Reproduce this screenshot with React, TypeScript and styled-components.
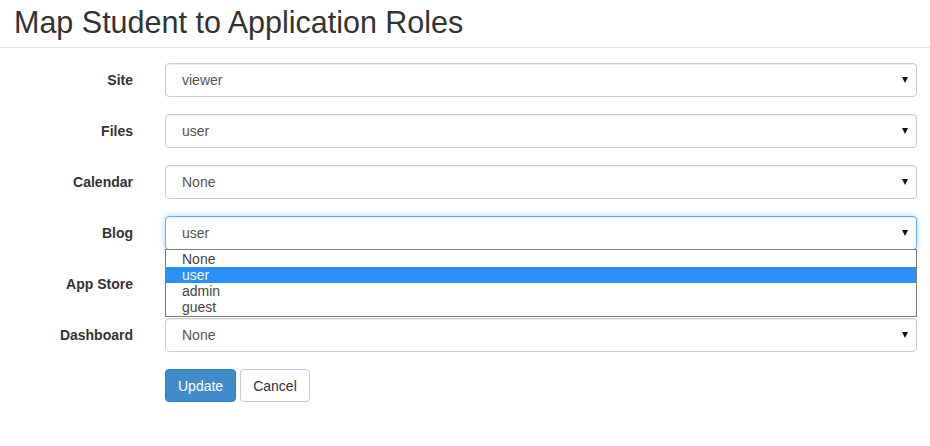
import React from "react";
import styled, { createGlobalStyle, css } from "styled-components";

const GlobalStyle = createGlobalStyle`
  body {
    margin: 0;
    background: #fff;
    font-family: "Liberation Sans", Arial, Helvetica, sans-serif;
    color: #333;
  }
`;

const Page = styled.div`
  width: 930px;
`;

const PageHeader = styled.div`
  border-bottom: 1px solid #e5e5e5;
  padding: 0 14px;
  height: 47px;
`;

const Title = styled.h1`
  margin: 0;
  padding-top: 4px;
  font-size: 30.5px;
  font-weight: 400;
  line-height: 36px;
  color: #333;
`;

const Form = styled.form`
  display: grid;
  grid-template-columns: 133px 1fr;
  column-gap: 32px;
  row-gap: 17px;
  padding: 15px 13px 0 0;
`;

const Label = styled.label`
  display: flex;
  align-items: center;
  justify-content: flex-end;
  font-size: 14px;
  font-weight: 700;
  color: #333;
`;

const SelectWrap = styled.div`
  position: relative;
`;

const SelectBox = styled.div<{ $focused?: boolean }>`
  display: flex;
  align-items: center;
  justify-content: space-between;
  box-sizing: border-box;
  height: 34px;
  padding: 0 8px 0 16px;
  border: 1px solid #ccc;
  border-radius: 4px;
  background: #fff;
  box-shadow: inset 0 1px 1px rgba(0, 0, 0, 0.075);
  font-size: 14px;
  color: #555;
  ${(p) =>
    p.$focused &&
    css`
      border-color: #66afe9;
      box-shadow: inset 0 1px 1px rgba(0, 0, 0, 0.075),
        0 0 6px rgba(102, 175, 233, 0.5);
    `}
`;

const Caret = styled.span`
  width: 0;
  height: 0;
  border-left: 3.5px solid transparent;
  border-right: 3.5px solid transparent;
  border-top: 6px solid #111;
`;

const OptionList = styled.ul`
  position: absolute;
  left: 0;
  right: 0;
  top: 33px;
  margin: 0;
  padding: 1px 0;
  list-style: none;
  background: #fff;
  border: 1px solid #7a7a7a;
  z-index: 2;
`;

const Option = styled.li<{ $selected?: boolean }>`
  height: 16px;
  line-height: 16px;
  padding-left: 16px;
  font-size: 14px;
  color: ${(p) => (p.$selected ? "#f2f8ff" : "#444")};
  background: ${(p) => (p.$selected ? "#2a8ff7" : "transparent")};
`;

const Actions = styled.div`
  grid-column: 2;
  display: flex;
  gap: 4px;
`;

const Button = styled.button<{ $primary?: boolean }>`
  box-sizing: border-box;
  height: 33px;
  padding: 0 12px;
  border-radius: 4px;
  font-family: "Liberation Sans", Arial, sans-serif;
  font-size: 14px;
  border: 1px solid ${(p) => (p.$primary ? "#357ebd" : "#ccc")};
  background: ${(p) => (p.$primary ? "#428bca" : "#fff")};
  color: ${(p) => (p.$primary ? "#fff" : "#333")};
`;

const rows = [
  { label: "Site", value: "viewer" },
  { label: "Files", value: "user" },
  { label: "Calendar", value: "None" },
  { label: "Blog", value: "user", open: true },
  { label: "App Store", value: "None" },
  { label: "Dashboard", value: "None" },
];

const options = ["None", "user", "admin", "guest"];

export default function App() {
  return (
    <Page>
      <GlobalStyle />
      <PageHeader>
        <Title>Map Student to Application Roles</Title>
      </PageHeader>
      <Form onSubmit={(e) => e.preventDefault()}>
        {rows.map((r) => (
          <React.Fragment key={r.label}>
            <Label>{r.label}</Label>
            <SelectWrap>
              <SelectBox $focused={r.open}>
                <span>{r.value}</span>
                <Caret />
              </SelectBox>
              {r.open && (
                <OptionList>
                  {options.map((o) => (
                    <Option key={o} $selected={o === r.value}>
                      {o}
                    </Option>
                  ))}
                </OptionList>
              )}
            </SelectWrap>
          </React.Fragment>
        ))}
        <Actions>
          <Button $primary type="submit">
            Update
          </Button>
          <Button type="button">Cancel</Button>
        </Actions>
      </Form>
    </Page>
  );
}
